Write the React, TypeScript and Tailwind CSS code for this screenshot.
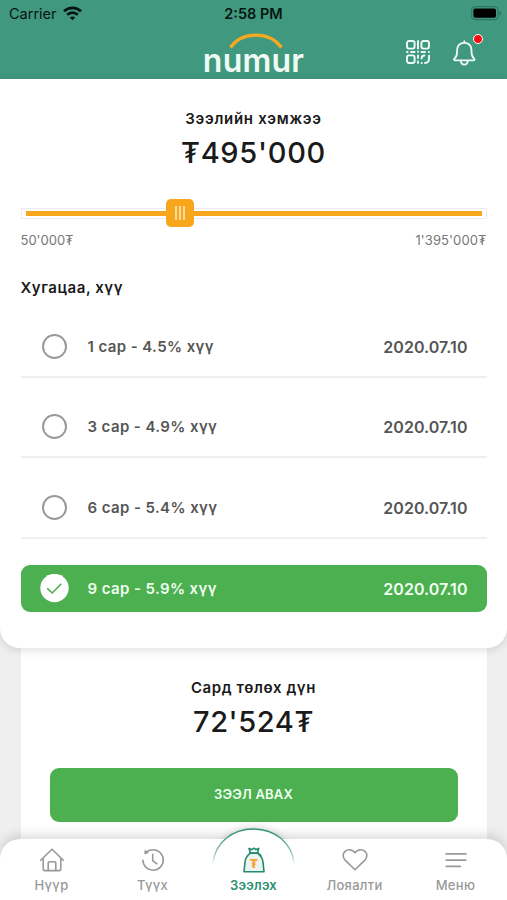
import React from 'react';

type Term = { label: string; date: string; selected?: boolean };

const terms: Term[] = [
  { label: '1 сар - 4.5% хүү', date: '2020.07.10' },
  { label: '3 сар - 4.9% хүү', date: '2020.07.10' },
  { label: '6 сар - 5.4% хүү', date: '2020.07.10' },
  { label: '9 сар - 5.9% хүү', date: '2020.07.10', selected: true },
];

function WifiIcon() {
  return (
    <svg width="19" height="15" viewBox="0 0 19 15" fill="none" stroke="#071511" strokeWidth="2.7" className="-mt-[2px]">
      <path d="M1 5.3C5.8.7 13.2.7 18 5.3" />
      <path d="M4.2 8.8c3-2.9 7.6-2.9 10.6 0" />
      <path d="M9.5 14.2 6.8 11.5c1.5-1.4 3.9-1.4 5.4 0z" fill="#071511" stroke="none" />
    </svg>
  );
}

function BatteryIcon() {
  return (
    <svg width="31" height="15" viewBox="0 0 31 15">
      <rect x="0.6" y="0.6" width="26.5" height="13" rx="3.8" fill="none" stroke="#2f7660" strokeWidth="1.1" />
      <rect x="2.4" y="2.5" width="22.6" height="9.2" rx="2" fill="#000" />
      <path d="M28.6 5v4.5c1.8-.7 1.8-3.8 0-4.5z" fill="#28634f" />
    </svg>
  );
}

function QrIcon() {
  return (
    <svg width="24" height="24" viewBox="0 0 24 24" fill="none" stroke="#effaf5" strokeWidth="1.9" strokeLinecap="round">
      <rect x="1" y="1" width="7.6" height="7.6" rx="2" />
      <rect x="15.4" y="1" width="7.6" height="7.6" rx="2" />
      <rect x="1" y="15.4" width="7.6" height="7.6" rx="2" />
      <path d="M12 1v7.5M1 12h.6M5 12h3.6M12 11.8h.2M15.5 12H19M22.8 12h.2M12 15.5V18M12 21.5V23M15.6 23h.2M15.6 18.5c0-1.8.8-3 2.8-3M23 15.6v3.2c0 2.8-1.6 4.2-4 4.2" />
    </svg>
  );
}

function BellIcon() {
  return (
    <svg width="23" height="27" viewBox="0 0 23 27" fill="none" stroke="#effaf5" strokeWidth="1.8" strokeLinecap="round" strokeLinejoin="round">
      <path d="M11.3 1.2v1.6M2.4 20.4c-1.8 0-1.7-1.3-.6-2.2C5.5 15 3.2 11 4.6 7.2c1-2.8 3.6-4.4 6.7-4.4s5.7 1.6 6.7 4.4c1.4 3.8-.9 7.8 2.8 11 1.1.9 1.2 2.2-.6 2.2z" />
      <path d="M7.9 21c.2 4.8 6.6 4.8 6.8 0" />
    </svg>
  );
}

function Logo() {
  return (
    <div className="flex w-[102px] flex-col items-center">
      <svg width="54" height="16" viewBox="0 0 54 16" fill="none" className="-mb-[7px] ml-[5px]">
        <path d="M1.4 14.4C13.5-1.8 40-2 52.4 14.4" stroke="#f5a923" strokeWidth="3.4" />
      </svg>
      <span className="text-[32px] font-semibold leading-[37px] tracking-[0.2px] text-[#effaf5]">numur</span>
    </div>
  );
}

function Header() {
  return (
    <header className="h-[79px] bg-[#40987e]">
      <div className="grid h-7 grid-cols-3 items-center px-[7px] text-[#071511]">
        <div className="flex items-center gap-[6px] pl-[2px] text-[14.5px]">
          Carrier
          <WifiIcon />
        </div>
        <div className="text-center text-[14.5px] font-semibold">2:58 PM</div>
        <div className="-mr-[2px] -mt-[2px] flex justify-end">
          <BatteryIcon />
        </div>
      </div>
      <div className="grid grid-cols-[1fr_102px_1fr] items-start">
        <div />
        <div className="pt-[5px]">
          <Logo />
        </div>
        <div className="flex items-start gap-[23px] pl-[101px] pt-[12px]">
          <QrIcon />
          <div className="relative">
            <BellIcon />
            <span className="absolute -right-[7px] -top-[6px] h-[10px] w-[10px] rounded-full border-[1.5px] border-white bg-[#f60d12]" />
          </div>
        </div>
      </div>
    </header>
  );
}

function AmountSlider() {
  return (
    <div className="flex h-7 w-full items-center">
      <div className="relative flex h-[11px] w-full items-center border border-[#ececf0] px-1">
        <div className="h-[5px] w-full bg-[#f8a71c]" />
        <div className="absolute -top-[10px] left-[144px] flex h-[28px] w-[28px] items-center justify-center gap-[2px] rounded-[5px] bg-[#f8a71c]">
          <span className="h-[14px] w-[2px] bg-[#fcdc9e]" />
          <span className="h-[14px] w-[2px] bg-[#fcdc9e]" />
          <span className="h-[14px] w-[2px] bg-[#fcdc9e]" />
        </div>
      </div>
    </div>
  );
}

function TermRow({ term }: { term: Term }) {
  if (term.selected) {
    return (
      <li className="mt-[26px] flex h-[47px] items-center rounded-[9px] bg-[#4caf50] pl-[19px] pr-[19px] text-[#f0fff0]">
        <svg width="29" height="29" viewBox="0 0 29 29" fill="none">
          <circle cx="14.5" cy="14" r="14.2" fill="#fff" />
          <path d="m7.3 14.3 5 4.7 9-9.2" stroke="#4caf50" strokeWidth="1.6" />
        </svg>
        <span className="ml-[19px] flex-1">{term.label}</span>
        <span className="text-[16px] tracking-[0.05px]">{term.date}</span>
      </li>
    );
  }
  return (
    <li className="flex h-[80.7px] items-end border-b-2 border-[#efefef] text-[#555]">
      <div className="flex h-[59px] w-full items-center pl-[21px] pr-[19px]">
        <span className="h-[25px] w-[25px] rounded-full border-2 border-[#999]" />
        <span className="ml-[21px] flex-1 pt-px">{term.label}</span>
        <span className="pt-px text-[16px] tracking-[0.05px]">{term.date}</span>
      </div>
    </li>
  );
}

function HomeIcon() {
  return (
    <svg width="26" height="26" viewBox="0 0 26 26" fill="none" stroke="#999" strokeWidth="1.6" strokeLinecap="round" strokeLinejoin="round">
      <path d="M1.7 13.2 13 2.2l11.3 11M4.2 11.2v10.6c0 1.2.6 1.8 1.8 1.8h14c1.2 0 1.8-.6 1.8-1.8V11.2" />
      <path d="M9.2 23.4v-7.2c0-1 .4-1.4 1.4-1.4h4.8c1 0 1.4.4 1.4 1.4v7.2" />
    </svg>
  );
}

function HistoryIcon() {
  return (
    <svg width="26" height="26" viewBox="0 0 26 26" fill="none" stroke="#999" strokeWidth="1.6" strokeLinecap="round" strokeLinejoin="round">
      <path d="M2.9 13.2a10.2 10.2 0 1 0 10.2-10.4c-3.2 0-5.8 1.2-7.8 3.2" />
      <path d="m5.2 4 .2 2.4 2.2-.8z" fill="#999" />
      <path d="M12.7 7.2v6.4l4.2 3.2" />
    </svg>
  );
}

function MoneyBagIcon() {
  return (
    <svg width="26" height="28" viewBox="0 0 26 28" fill="none" stroke="#218b6d" strokeWidth="1.6" strokeLinecap="round" strokeLinejoin="round">
      <path d="M9.4 6.8 8 2.4l2.8 1.2L13 2.2l2 1.4 2.7-1.2-1.2 4.4" fill="#f3f8f6" />
      <path d="M9.2 7.2C5.8 10 4.4 12.6 4 16L3 25.8h20L22 16c-.4-3.4-1.9-6-5.3-8.8z" fill="#edf3f0" />
      <path d="M8.8 7h8.3M16.8 7.2l3 2.2" />
      <text x="13" y="21.6" textAnchor="middle" fontFamily="Inter, sans-serif" fontSize="12" fontWeight="800" fill="#f5a32a" stroke="none">₮</text>
    </svg>
  );
}

function HeartIcon() {
  return (
    <svg width="26" height="26" viewBox="0 0 26 26" fill="none" stroke="#999" strokeWidth="1.6" strokeLinejoin="round">
      <path d="M13 22.8 3.1 13.1C.4 10.3.7 6.5 3 4.4c2.8-2.5 7.6-2 10 1.4 2.4-3.4 7.2-3.9 10-1.4 2.3 2.1 2.6 5.9-.1 8.7z" />
    </svg>
  );
}

function MenuIcon() {
  return (
    <svg width="26" height="26" viewBox="0 0 26 26" fill="none" stroke="#999" strokeWidth="1.7" strokeLinecap="round">
      <path d="M3.2 6.9h19.6M3.2 13.1h19.6M3.2 19.3h14.2" />
    </svg>
  );
}

function NavItem({ label, icon, active }: { label: string; icon: React.ReactNode; active?: boolean }) {
  return (
    <div
      className={
        active
          ? 'z-10 flex w-[101px] flex-col items-center text-[13px] font-semibold leading-4 tracking-[0.2px] text-[#2c8f73]'
          : 'z-10 flex w-[101px] flex-col items-center text-[13px] font-medium leading-4 tracking-[0.3px] text-[#999]'
      }
    >
      <div className="flex h-[30px] items-center">{icon}</div>
      <span className="mt-[2px]">{label}</span>
    </div>
  );
}

function BottomNav() {
  return (
    <nav className="relative z-20 flex h-[61px] justify-center rounded-t-[20px] bg-white pt-[6px] shadow-[0_-4px_12px_rgba(0,0,0,0.14)]">
      <svg className="absolute -top-[22px] left-[203px]" width="101" height="60" viewBox="0 0 101 60">
        <defs>
          <linearGradient id="arc" x1="0" y1="12" x2="0" y2="48" gradientUnits="userSpaceOnUse">
            <stop offset="0" stopColor="#2c8f73" />
            <stop offset="0.6" stopColor="#83bdaa" />
            <stop offset="1" stopColor="#ffffff" />
          </linearGradient>
          <filter id="soft" x="-20%" y="-20%" width="140%" height="140%">
            <feGaussianBlur stdDeviation="4" />
          </filter>
          <clipPath id="above">
            <rect width="101" height="22" />
          </clipPath>
        </defs>
        <g clipPath="url(#above)">
          <circle cx="50.5" cy="51.5" r="41" fill="#000" opacity="0.16" filter="url(#soft)" />
        </g>
        <path d="M10 46C12 26 29 12 50.5 12S89 26 91 46V60H10z" fill="#fff" />
        <path d="M10 46C12 26 29 12 50.5 12S89 26 91 46" fill="none" stroke="url(#arc)" strokeWidth="1.5" />
      </svg>
      <NavItem label="Нүүр" icon={<HomeIcon />} />
      <NavItem label="Түүх" icon={<HistoryIcon />} />
      <NavItem label="Зээлэх" icon={<MoneyBagIcon />} active />
      <NavItem label="Лояалти" icon={<HeartIcon />} />
      <NavItem label="Меню" icon={<MenuIcon />} />
    </nav>
  );
}

export default function App() {
  return (
    <div className="flex h-[900px] w-[507px] flex-col overflow-hidden bg-[#efefef] font-['Inter','Noto_Sans',sans-serif]">
      <Header />
      <main className="relative z-10 h-[569px] rounded-b-[20px] bg-white px-[20.5px] shadow-[0_2px_10px_rgba(0,0,0,0.13)]">
        <div className="flex flex-col items-center pt-[28px] text-[#1a1a1a]">
          <h1 className="text-[15px] font-semibold leading-6 tracking-[0.7px]">Зээлийн хэмжээ</h1>
          <p className="mt-[2px] text-[29px] font-medium leading-10 tracking-[0.7px]">₮495'000</p>
        </div>
        <div className="mt-[26px]">
          <AmountSlider />
        </div>
        <div className="mt-[3px] flex justify-between text-[13px] leading-5 text-[#777]">
          <span>50'000₮</span>
          <span className="tracking-[0.1px]">1'395'000₮</span>
        </div>
        <h2 className="mt-[26px] text-[15px] font-semibold leading-6 tracking-[0.55px] text-[#1a1a1a]">Хугацаа, хүү</h2>
        <ul className="-mt-[3px] text-[15px] font-semibold leading-6 tracking-[0.4px]">
          {terms.map((term) => (
            <TermRow key={term.label} term={term} />
          ))}
        </ul>
      </main>
      <section className="mx-[20.5px] flex h-[191px] flex-col items-center bg-white px-[29px] pt-[28px] text-[#1a1a1a]">
        <h2 className="text-[15px] font-semibold leading-6 tracking-[0.6px]">Сард төлөх дүн</h2>
        <p className="mt-[2px] text-[29px] font-medium leading-10 tracking-[0.6px]">72'524₮</p>
        <button className="mt-[26px] h-[54px] w-full shrink-0 rounded-[9px] bg-[#4caf50] text-[13px] font-semibold tracking-[0.2px] text-[#f0fff0]">
          ЗЭЭЛ АВАХ
        </button>
      </section>
      <BottomNav />
    </div>
  );
}
